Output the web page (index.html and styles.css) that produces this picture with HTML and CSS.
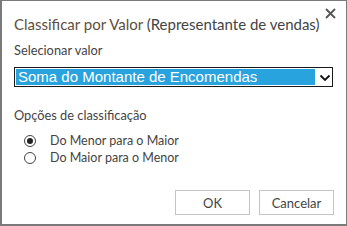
FILE: index.html
```html
<!DOCTYPE html>
<html lang="pt">
<head>
<meta charset="utf-8">
<link rel="stylesheet" href="styles.css">
</head>
<body>
<div class="dialog">
  <button class="close" aria-label="Fechar">
    <svg width="11" height="11" viewBox="0 0 11 11"><path d="M1 1 L10 10 M10 1 L1 10" stroke="#555" stroke-width="1.8" fill="none"/></svg>
  </button>
  <h1 class="title"><span class="title-main">Classificar por Valor</span> (Representante de vendas)</h1>
  <div class="label">Selecionar valor</div>
  <div class="select">
    <span class="select-value">Soma do Montante de Encomendas</span>
    <svg class="chev" width="12" height="8" viewBox="0 0 12 8"><path d="M1.5 1.5 L6 6 L10.5 1.5" stroke="#111" stroke-width="1.8" fill="none"/></svg>
  </div>
  <div class="label options-label">Opções de classificação</div>
  <div class="radios">
    <label class="radio"><span class="circle checked"></span>Do Menor para o Maior</label>
    <label class="radio"><span class="circle"></span>Do Maior para o Menor</label>
  </div>
  <div class="buttons">
    <button class="btn">OK</button>
    <button class="btn">Cancelar</button>
  </div>
</div>
</body>
</html>
```
FILE: styles.css
```css
html, body { margin: 0; padding: 0; background: #fff; }
body { width: 347px; height: 226px; overflow: hidden; }
.dialog {
  position: relative;
  box-sizing: border-box;
  width: 347px;
  height: 226px;
  border: 1px solid #7a7a7a;
  border-bottom-width: 2px;
  border-left-width: 2px;
  padding: 12px 12px 0 12px;
  font-family: "Lato", "Open Sans", sans-serif;
  color: #444;
  display: flex;
  flex-direction: column;
}
.close {
  position: absolute;
  top: 7px;
  right: 10px;
  border: 0;
  background: none;
  padding: 0;
  width: 11px;
  height: 11px;
  display: flex;
}
.title {
  margin: 0;
  font-weight: normal;
  font-size: 15px;
  line-height: 22px;
  color: #444;
  white-space: nowrap;
}
.title-main { color: #5e4f3e; }
.label {
  margin-top: 7px;
  font-size: 12.8px;
  line-height: 17px;
  color: #444;
}
.select {
  margin-top: 8px;
  height: 20px;
  width: 319px;
  box-sizing: border-box;
  border: 1px solid #1a1a1a;
  padding: 1px;
  display: flex;
  align-items: stretch;
}
.select-value {
  background: #29a3dd;
  color: #fff;
  font-family: "Liberation Sans", Arial, sans-serif;
  font-size: 15px;
  line-height: 16px;
  padding-left: 2px;
  width: 297px;
  white-space: nowrap;
}
.chev { margin: 5px 0 0 4px; }
.options-label { margin-top: 20px; }
.radios {
  margin-top: 8px;
  padding-left: 10px;
  display: flex;
  flex-direction: column;
  gap: 0;
}
.radio {
  display: flex;
  align-items: center;
  font-size: 12.5px;
  line-height: 17px;
  color: #444;
}
.circle {
  box-sizing: border-box;
  width: 12px;
  height: 12px;
  border: 1px solid #444;
  border-radius: 50%;
  margin-right: 14px;
  display: flex;
  align-items: center;
  justify-content: center;
}
.circle.checked::after {
  content: "";
  width: 6px;
  height: 6px;
  border-radius: 50%;
  background: #222;
}
.buttons {
  margin-top: auto;
  margin-bottom: 9px;
  display: flex;
  justify-content: flex-end;
  gap: 9px;
}
.btn {
  width: 75px;
  height: 25px;
  background: #fff;
  border: 1px solid #c4c4c4;
  font-family: "Lato", "Open Sans", sans-serif;
  font-size: 13px;
  color: #444;
  padding: 0;
}
```
